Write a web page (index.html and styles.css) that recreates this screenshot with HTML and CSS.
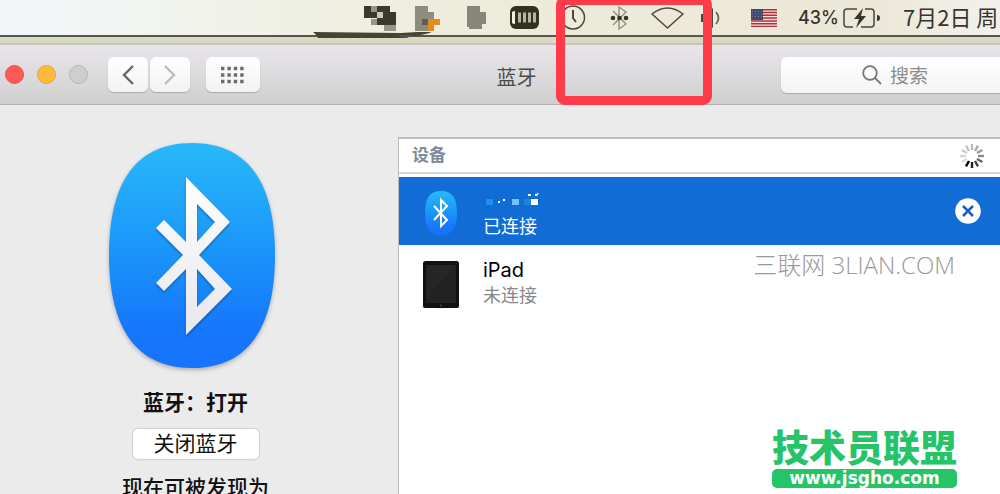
FILE: index.html
```html
<!DOCTYPE html>
<html lang="zh-CN">
<head>
<meta charset="utf-8">
<title>蓝牙</title>
<link rel="stylesheet" href="styles.css">
</head>
<body>
<div class="desktop">
  <header class="menubar">
    <svg class="st-blocks" width="33" height="26" viewBox="0 0 33 26"><path fill="#3b382c" d="M0 0h26v6h6v13H13v-7H0z"/><path fill="#96958a" d="M7 0h6v6H7zM7 13h6v6H7zM20 19h12v6H20z"/><path fill="#c9c8bd" d="M13 6h6v6h-6z"/></svg>
    <svg class="st-bird" width="26" height="26" viewBox="0 0 26 26"><path fill="#8d8c7d" d="M0 0h13v6h6v7h-6v12H0z"/><path fill="#5f5e56" d="M7 13h6v6H7z"/><path fill="#e58b1c" d="M13 13h12v6h-6v6h-6z"/><path fill="#8d8c7d" d="M13 6h6v7h-6z"/></svg>
    <svg class="st-cup" width="20" height="26" viewBox="0 0 20 26"><path fill="#87867a" d="M0 0h13v6h6v12h-4v5H2v-2H0z"/></svg>
    <svg class="st-memory" width="29" height="24" viewBox="0 0 29 24"><rect width="29" height="23" rx="6" fill="#33301f"/><path fill="#f2f0dd" d="M2 6q1-1 3-1v13q-2 0-3-1z"/><path stroke="#b5b3a1" stroke-width="3" d="M9.500 6.500v10M14.500 6.500v10M19.500 6.500v10M24.500 6.500v10"/></svg>
    <svg class="st-clock" width="25" height="25" viewBox="0 0 25 25" fill="none" stroke="#4a483a" stroke-width="1.500"><circle cx="12" cy="12.500" r="11.500"/><path stroke-width="2" d="M12 5v8l3 4"/></svg>
    <svg class="st-bt" width="20" height="26" viewBox="0 0 20 26"><path fill="none" stroke="#918f7d" stroke-width="1.400" d="m3 6 13 13-7 5V2l7 5L3 20"/><g fill="#38362a"><circle cx="3" cy="13" r="2.300"/><circle cx="9.500" cy="13" r="2.300"/><circle cx="16" cy="13" r="2.300"/></g></svg>
    <svg class="st-wifi" width="33" height="24" viewBox="0 0 33 24"><path fill="none" stroke="#4a483a" stroke-width="1.500" stroke-linejoin="round" d="M1 8Q16.500-4 32 8L16.500 22z"/></svg>
    <svg class="st-sound" width="20" height="22" viewBox="0 0 20 22"><path fill="#4a483a" d="M0 7h4l8-6v20l-8-6H0z"/><path fill="none" stroke="#68665a" stroke-width="1.800" d="M15 5q5 6 0 12"/></svg>
    <svg class="st-flag" width="26" height="18" viewBox="0 0 26 18"><rect width="26" height="18" fill="#f5dfda"/><path stroke="#a9343a" stroke-width="1.500" d="M0 .7h26M0 3.500h26M0 6.300h26M0 9.100h26M0 11.900h26M0 14.700h26M0 17.500h26"/><rect width="12" height="11" fill="#414a6c"/><path stroke="#747c96" stroke-dasharray="1 2" d="M1 2.500h10M1 5h10M1 7.500h10"/></svg>
    <span class="percent">43%</span>
    <svg class="st-battery" width="37" height="20" viewBox="0 0 37 20"><g fill="none" stroke="#47453d" stroke-width="1.500"><path d="M14 1H4Q1 1 1 4v12q0 3 3 3h6M22 1h6q3 0 3 3v12q0 3-3 3H18"/></g><path fill="#37352c" d="m20 0-9 11h5l-3 9 10-12h-5zM34 7q3 0 3 3t-3 3z"/></svg>
    <time class="date">7月2日 周</time>
  </header>
  <div class="wallpaper"></div>

  <main class="window">
    <div class="toolbar">
      <div class="lights">
        <button class="light close" aria-label="关闭"></button>
        <button class="light minimize" aria-label="最小化"></button>
        <button class="light zoom" aria-label="缩放"></button>
      </div>
      <div class="nav">
        <button class="tool" aria-label="后退"><svg width="12" height="20" viewBox="0 0 12 20"><path fill="none" stroke="#686868" stroke-width="2.400" d="M11 1 2 10l9 9"/></svg></button>
        <button class="tool" aria-label="前进"><svg width="12" height="20" viewBox="0 0 12 20"><path fill="none" stroke="#bcbcbc" stroke-width="2.400" d="m1 1 9 9-9 9"/></svg></button>
      </div>
      <button class="tool all" aria-label="显示全部"><svg width="24" height="18" viewBox="0 0 24 18"><path stroke="#6c6c6c" stroke-width="3.400" stroke-dasharray="3.400 3" d="M0 2.500h24M0 9h24M0 15.500h24"/></svg></button>
      <h1 class="title">蓝牙</h1>
      <label class="search">
        <svg width="20" height="20" viewBox="0 0 20 20"><g fill="none" stroke="#777" stroke-width="1.800"><circle cx="8" cy="8" r="6.800"/><path d="m13 13 6 6"/></g></svg>
        <input type="search" placeholder="搜索" aria-label="搜索">
      </label>
    </div>

    <div class="content">
      <section class="status">
        <svg class="bt-logo" width="186" height="246" viewBox="3 0 186 246">
          <defs>
            <linearGradient id="blue" x2="0" y2="1"><stop stop-color="#28b9f8"/><stop offset=".5" stop-color="#1a93fa"/><stop offset=".82" stop-color="#1677fb"/><stop offset="1" stop-color="#1773fb"/></linearGradient>
            <linearGradient id="white" x2="0" y2="1"><stop stop-color="#fff"/><stop offset="1" stop-color="#e7e7ec"/></linearGradient>
          </defs>
          <path class="bt-shape" fill="url(#blue)" d="M92 8C154 8 175 56 175 120S154 233 92 233 9 184 9 120 30 8 92 8z"/>
          <path class="bt-rune" fill="url(#white)" fill-rule="evenodd" d="M86 42 130 87 99 120 132 154 86 200V134L64 156 56 148 83 120 56 93 64 85 86 107zM97 69V107L115 87zM97 134V172L115 154z"/>
        </svg>
        <h2 class="state">蓝牙：打开</h2>
        <button class="toggle">关闭蓝牙</button>
        <p class="discover">现在可被发现为</p>
      </section>

      <section class="devices">
        <div class="devices-head">
          <h2 class="devices-title">设备</h2>
          <svg width="26" height="26" viewBox="-13 -13 26 26" stroke-width="2.400"><path stroke="#bbb" d="M0-6v-6"/><path stroke="#aaa" d="m3-5 3-5.400"/><path stroke="#999" d="m5-3 5.400-3"/><path stroke="#888" d="M6 0h6"/><path stroke="#666" d="m5 3 5.400 3"/><path stroke="#444" d="m3 5 3 5.400"/><path stroke="#222" d="M0 6v6"/><path stroke="#000" d="m-3 5-3 5.400"/><path stroke="#ddd" d="m-5 3-5.400 3"/><path stroke="#d4d4d4" d="M-6 0h-6"/><path stroke="#ccc" d="m-5-3-5.400-3"/><path stroke="#c4c4c4" d="m-3-5-3-5.400"/></svg>
        </div>
        <ul class="list">
          <li class="device selected">
            <span class="thumb"><svg width="34" height="46" viewBox="0 0 34 46"><path fill="url(#blue)" d="M17 1C29 1 33 9 33 23S29 45 17 45 1 37 1 23 5 1 17 1z"/><path fill="none" stroke="#fff" stroke-width="2" d="m10 16 13 14-6 6V10l6 6-13 14"/></svg></span>
            <div class="info">
              <svg class="masked" width="56" height="18" viewBox="0 0 56 18"><path fill="#1d91ed" d="M3 9h7v6H3z"/><path fill="#73c3fa" d="M29 9h7v6h-7z"/><path fill="#fff" d="M48 9h7v6h-7zM15 11h2v2h-2zM20 9h2v2h-2zM45 4h3v2h-3zM52 4l4-1-2 3h-2z"/><path fill="#1c82e3" d="M41 9h7v6h-7z"/></svg>
              <span class="sub connected">已连接</span>
            </div>
            <button class="remove" aria-label="移除"><svg width="26" height="26" viewBox="0 0 26 26"><circle cx="13" cy="13" r="12.800" fill="#fff"/><path stroke="#1b62bd" stroke-width="2.600" d="m8 8 10 10M18 8 8 18"/></svg></button>
          </li>
          <li class="device">
            <span class="thumb"><svg width="40" height="48" viewBox="0 0 40 48"><ellipse cx="20" cy="46" rx="20" ry="1.200" fill="#bbb"/><rect x="2" width="36" height="47" rx="2.500" fill="#111"/><path fill="#222" d="M5 4h30v38H5z"/><path fill="#262626" d="M5 4h30L5 38z"/><circle cx="20" cy="44.500" r="1" fill="#444"/></svg></span>
            <div class="info">
              <span class="name">iPad</span>
              <span class="sub">未连接</span>
            </div>
          </li>
        </ul>
      </section>
    </div>
  </main>

  <svg class="smudge" width="124" height="8" viewBox="0 0 124 8"><path fill="#46442f" d="M0 0 88 1l33-2q-8 4-22 5l-6 2H5Q4 3 0 0z"/><path fill="#50535a" d="M86 3h14q-7 5-14 1z"/></svg>
  <div class="highlight"></div>
  <p class="watermark">三联网 3LIAN.COM</p>
  <div class="brand">
    <strong class="brand-name">技术员联盟</strong>
    <span class="brand-url">www.jsgho.com</span>
  </div>
</div>
</body>
</html>
```

FILE: styles.css
```css
* { box-sizing: border-box; }

body {
  margin: 0;
  font-family: Inter, "Noto Sans CJK SC", sans-serif;
  color: #111;
}

h1, h2, p, ul { margin: 0; padding: 0; }
ul { list-style: none; }
svg { display: block; flex: none; }

button {
  padding: 0;
  border: 0;
  font: inherit;
  color: inherit;
}

.desktop {
  position: relative;
  display: flex;
  flex-direction: column;
  height: 100vh;
  overflow: hidden;
}

.menubar {
  display: flex;
  justify-content: flex-end;
  align-items: center;
  height: 37px;
  flex: none;
  border-bottom: 2px solid #57564b;
  background: linear-gradient(90deg, #f3f7fa, #f0f1e6 28%, #edebd9 50%, #ece8d8 88%, #f2f1ed);
  color: #37352f;
  white-space: nowrap;
}

.st-blocks, .st-bird { margin-top: 3px; }
.st-blocks { margin-right: 18px; }
.st-bird { margin-right: 26px; }
.st-cup { margin: 3px 23px 0 0; }
.st-memory { margin-right: 22px; }
.st-clock { margin-right: 24px; }
.st-bt { margin-right: 21px; }
.st-wifi { margin-right: 17px; }
.st-sound { margin-right: 30px; }
.st-flag { margin-right: 21px; }
.percent { width: 45px; font-size: 18px; font-weight: 500; }

.date {
  width: 97px;
  margin-left: 23px;
  padding-bottom: 4px;
  font: 22px/30px "Noto Sans CJK SC", sans-serif;
}

.wallpaper {
  flex: none;
  height: 8px;
  border-bottom: 2px solid #c6c6b8;
  background: #d9d9c6;
}

.window {
  display: flex;
  flex-direction: column;
  flex: 1;
  min-height: 0;
  background: #ebebeb;
}

.toolbar {
  display: flex;
  align-items: center;
  flex: none;
  height: 60px;
  padding-left: 5px;
  border-bottom: 1px solid #b0b0b0;
  background: linear-gradient(#e9e6eb, #cfcfcf);
}

.lights { display: flex; gap: 13px; margin-right: 20px; }
.light { width: 19px; height: 19px; border: 1px solid; border-radius: 50%; }
.close { background: #fc5b57; border-color: #e9504c; }
.minimize { background: #fdba3a; border-color: #e2a63a; }
.zoom { background: #cecece; border-color: #b6b6b6; }

.nav { display: flex; gap: 2px; margin-right: 16px; }

.tool {
  display: grid;
  place-items: center;
  width: 40px;
  height: 35px;
  border-radius: 6px;
  background: linear-gradient(#fff, #f2f2f2);
  box-shadow: 0 1px 1px #aaa;
}

.all { width: 54px; }

.title {
  flex: 1;
  padding: 3px 8px 0 0;
  font-size: 20px;
  font-weight: 400;
  color: #4c4c4c;
  text-align: center;
}

.search {
  display: flex;
  align-items: center;
  gap: 8px;
  width: 219px;
  height: 36px;
  padding-left: 81px;
  border-radius: 6px 0 0 6px;
  background: linear-gradient(#fff, #f4f4f4);
  box-shadow: 0 1px 1px #aaa;
}

.search input {
  width: 100px;
  padding: 0;
  border: 0;
  outline: 0;
  background: none;
  font: 19px "Noto Sans CJK SC", sans-serif;
}

.search input::placeholder { color: #8e8e8e; }

.content { display: flex; flex: 1; min-height: 0; }

.status {
  display: flex;
  flex-direction: column;
  align-items: center;
  width: 398px;
  flex: none;
  padding: 30px 7px 0 0;
}

.bt-shape { filter: drop-shadow(0 2px 2px #0004); }
.bt-rune { filter: drop-shadow(0 2px 1px #0004); }

.state { margin-top: 7px; font-size: 21px; line-height: 30px; font-weight: 600; }

.toggle {
  width: 126px;
  height: 32px;
  margin-top: 11px;
  border-radius: 5px;
  background: #fff;
  box-shadow: 0 0 2px #999;
  font-size: 21px;
  line-height: 30px;
}

.discover { margin-top: 14px; font-size: 21px; line-height: 30px; font-weight: 500; }

.devices {
  flex: 1;
  margin-top: 32px;
  border: solid #bdbdbd;
  border-width: 2px 0 0 1px;
  background: #fff;
}

.devices-head {
  display: flex;
  align-items: center;
  justify-content: space-between;
  height: 35px;
  margin-bottom: 3px;
  padding: 0 15px 0 13px;
  border-bottom: 2px solid #d5d8d5;
}

.devices-title { padding-bottom: 4px; font-size: 17px; font-weight: 600; color: #7f8c99; }

.device { display: flex; align-items: center; height: 68px; padding-right: 19px; }
.selected { background: #116cd6; color: #fff; }
.thumb { display: grid; place-items: center; width: 84px; flex: none; padding-top: 3px; }
.device:last-child { height: 76px; }
.info { display: flex; flex-direction: column; flex: 1; }
.selected .info { padding-top: 8px; }
.name { font-size: 20px; line-height: 26px; color: #000; }
.sub { font-size: 18px; line-height: 26px; color: #888; }
.connected { padding-top: 6px; color: #fff; }
.remove { background: none; }

.smudge { position: absolute; top: 32px; right: 563px; }

.highlight {
  position: absolute;
  top: -4px;
  right: 288px;
  width: 156px;
  height: 109px;
  border: 9px solid #fd3b49;
  border-radius: 9px;
}

.watermark {
  position: absolute;
  top: 249px;
  right: 45px;
  font: 300 24px/32px "Open Sans", "Noto Sans CJK SC", sans-serif;
  color: #999;
}

.brand {
  position: absolute;
  right: 43px;
  bottom: 6px;
  display: flex;
  flex-direction: column;
  width: 185px;
  color: #25c468;
}

.brand-name { font: 900 37px/46px "Noto Sans CJK SC", sans-serif; }

.brand-url {
  border-radius: 5px;
  background: #25c468;
  color: #fff;
  font: 700 17px/19px "DejaVu Sans", sans-serif;
  text-align: center;
}
```
